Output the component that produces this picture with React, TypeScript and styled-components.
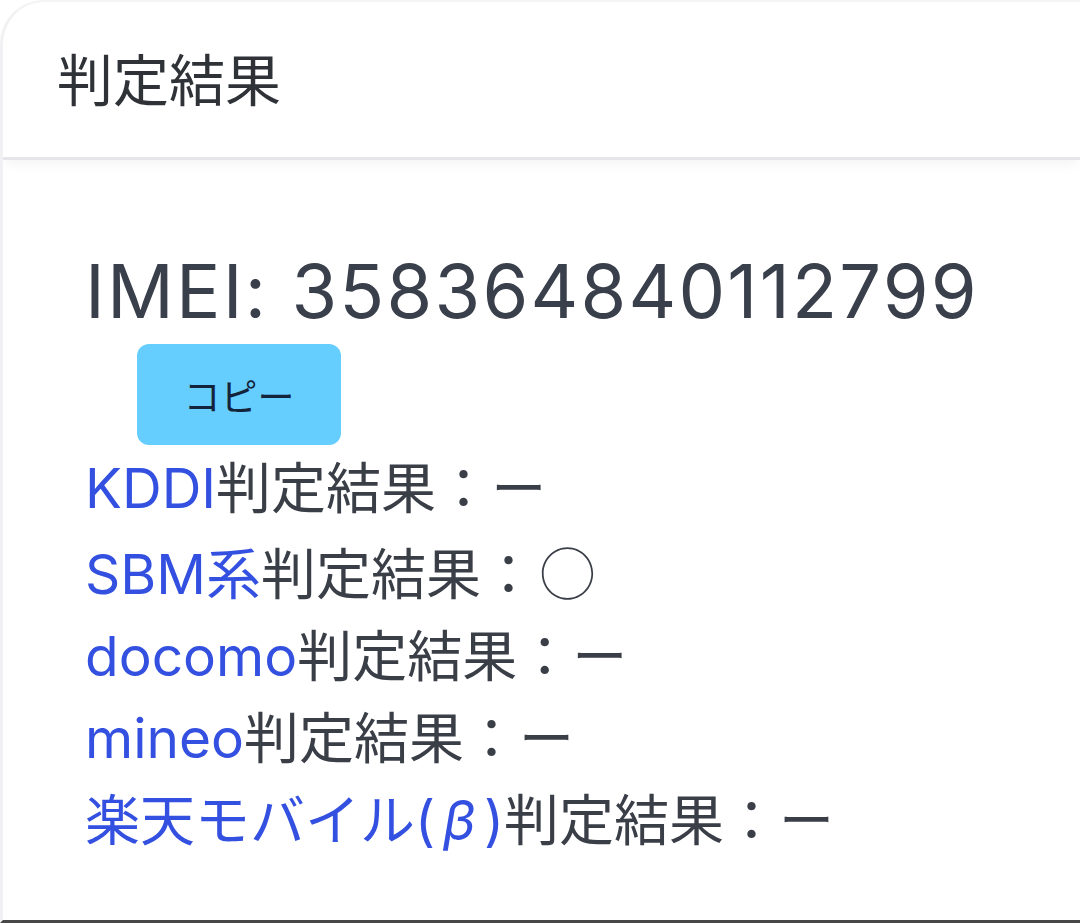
import styled, { createGlobalStyle } from "styled-components";

const GlobalStyle = createGlobalStyle`
  html, body {
    margin: 0;
    padding: 0;
    background: #ffffff;
  }
  body {
    font-family: Inter, "Noto Sans CJK JP", sans-serif;
  }
`;

const Card = styled.section`
  box-sizing: border-box;
  width: 1080px;
  height: 923px;
  border-left: 3px solid #f1f1f3;
  border-top: 2px solid #f4f4f6;
  border-bottom: 3px solid #474747;
  border-top-left-radius: 44px;
  display: flex;
  flex-direction: column;
  overflow: hidden;
`;

const Header = styled.header`
  height: 158px;
  flex-shrink: 0;
  display: flex;
  align-items: center;
  padding: 0 0 6px 54px;
  box-sizing: border-box;
  font-size: 56px;
  color: #2f3338;
  border-bottom: 3px solid #e6e6ea;
  box-shadow: 0 8px 10px -3px rgba(0, 0, 0, 0.045);
  font-family: "Noto Sans CJK JP", sans-serif;
`;

const Body = styled.div`
  padding: 86px 0 0 82px;
  display: flex;
  flex-direction: column;
  align-items: flex-start;
`;

const Imei = styled.div`
  font-size: 74px;
  line-height: 90px;
  letter-spacing: 2.2px;
  color: #393f4b;
`;

const CopyButton = styled.button`
  margin: 8px 0 0 52px;
  width: 204px;
  height: 101px;
  border: none;
  border-radius: 12px;
  background: #66ceff;
  color: #13243a;
  font-size: 37px;
  font-family: "Noto Sans CJK JP", sans-serif;
  padding: 0;
`;

const ResultList = styled.ul`
  list-style: none;
  margin: 2px 0 0;
  padding: 0;
`;

const ResultRow = styled.li`
  font-size: 55px;
  line-height: 82px;
  color: #3a3e47;
  white-space: nowrap;
`;

const Carrier = styled.span`
  color: #3350e0;
`;

const Greek = styled.span`
  font-style: italic;
  margin: 0 8px;
`;

const Circle = styled.span`
  font-family: "Noto Sans CJK JP", sans-serif;
  margin-left: 4px;
`;

const results = [
  { carrier: "KDDI", mark: "ー" },
  { carrier: "SBM系", mark: "◯" },
  { carrier: "docomo", mark: "ー" },
  { carrier: "mineo", mark: "ー" },
  { carrier: "楽天モバイル", beta: true, mark: "ー" },
];

const App = () => {
  return (
    <>
      <GlobalStyle />
      <Card>
        <Header>判定結果</Header>
        <Body>
          <Imei>IMEI: 358364840112799</Imei>
          <CopyButton>コピー</CopyButton>
          <ResultList>
            {results.map(item => (
              <ResultRow key={item.carrier}>
                <Carrier>
                  {item.carrier}
                  {item.beta && (
                    <>
                      (<Greek>β</Greek>)
                    </>
                  )}
                </Carrier>
                判定結果：
                {item.mark === "◯" ? <Circle>{item.mark}</Circle> : item.mark}
              </ResultRow>
            ))}
          </ResultList>
        </Body>
      </Card>
    </>
  );
};

export default App;
